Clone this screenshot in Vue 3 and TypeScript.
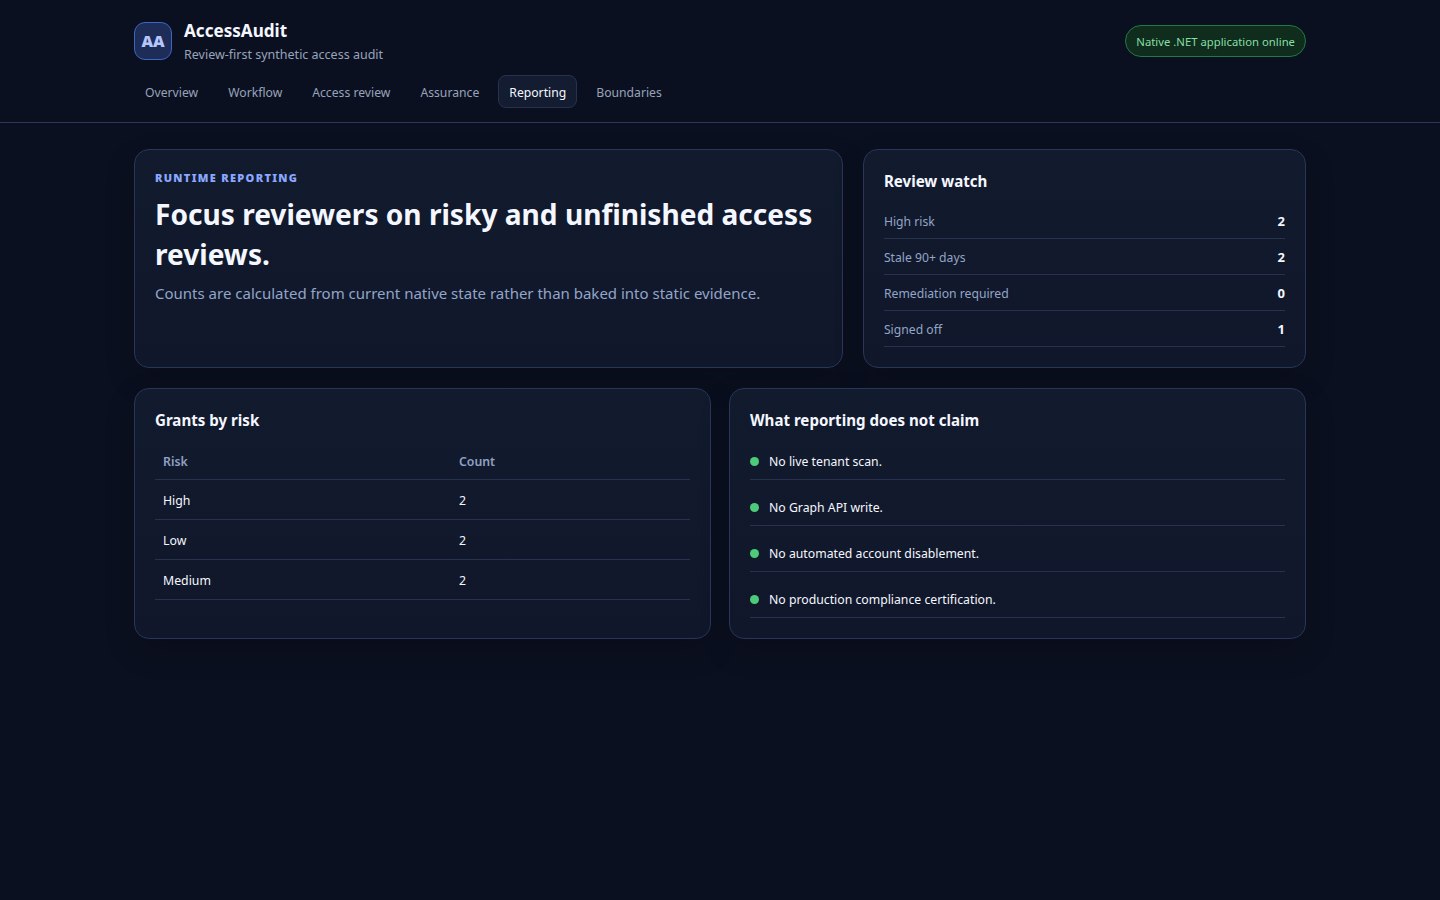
<script setup lang="ts">
interface NavItem {
  label: string
  active?: boolean
}

const navItems: NavItem[] = [
  { label: 'Overview' },
  { label: 'Workflow' },
  { label: 'Access review' },
  { label: 'Assurance' },
  { label: 'Reporting', active: true },
  { label: 'Boundaries' }
]

const watchRows = [
  { label: 'High risk', value: 2 },
  { label: 'Stale 90+ days', value: 2 },
  { label: 'Remediation required', value: 0 },
  { label: 'Signed off', value: 1 }
]

const riskRows = [
  { risk: 'High', count: 2 },
  { risk: 'Low', count: 2 },
  { risk: 'Medium', count: 2 }
]

const claims = [
  'No live tenant scan.',
  'No Graph API write.',
  'No automated account disablement.',
  'No production compliance certification.'
]
</script>

<template>
  <div class="page">
    <header class="topbar">
      <div class="shell">
        <div class="topbar-row">
          <div class="brand">
            <div class="brand-mark">AA</div>
            <div>
              <div class="brand-name">AccessAudit</div>
              <div class="brand-sub">Review-first synthetic access audit</div>
            </div>
          </div>
          <div class="status-pill">Native .NET application online</div>
        </div>
        <nav class="nav">
          <a
            v-for="item in navItems"
            :key="item.label"
            class="nav-link"
            :class="{ 'nav-link-active': item.active }"
          >{{ item.label }}</a>
        </nav>
      </div>
    </header>

    <main class="shell content">
      <section class="grid-top">
        <div class="card hero">
          <div class="eyebrow">RUNTIME REPORTING</div>
          <h1>Focus reviewers on risky and unfinished access reviews.</h1>
          <p>Counts are calculated from current native state rather than baked into static evidence.</p>
        </div>
        <div class="card">
          <h2>Review watch</h2>
          <div v-for="row in watchRows" :key="row.label" class="watch-row">
            <span>{{ row.label }}</span>
            <strong>{{ row.value }}</strong>
          </div>
        </div>
      </section>

      <section class="grid-bottom">
        <div class="card">
          <h2>Grants by risk</h2>
          <table>
            <thead>
              <tr>
                <th class="col-risk">Risk</th>
                <th>Count</th>
              </tr>
            </thead>
            <tbody>
              <tr v-for="row in riskRows" :key="row.risk">
                <td>{{ row.risk }}</td>
                <td>{{ row.count }}</td>
              </tr>
            </tbody>
          </table>
        </div>
        <div class="card">
          <h2>What reporting does not claim</h2>
          <ul class="claims">
            <li v-for="claim in claims" :key="claim">
              <span class="dot"></span>{{ claim }}
            </li>
          </ul>
        </div>
      </section>
    </main>
  </div>
</template>

<style>
html,
body {
  margin: 0;
  background: #0b1020;
}
</style>

<style scoped>
.page {
  min-height: 900px;
  background: #0b1020;
  color: #f4f7ff;
  font-family: "Noto Sans", "Open Sans", sans-serif;
}

.shell {
  width: 1172px;
  margin: 0 auto;
}

.topbar {
  border-bottom: 1px solid #2a3858;
  padding: 20px 0 14px;
}

.topbar-row {
  display: flex;
  justify-content: space-between;
  align-items: flex-start;
}

.brand {
  display: flex;
  align-items: flex-start;
  gap: 12px;
}

.brand-mark {
  width: 38px;
  height: 38px;
  box-sizing: border-box;
  margin-top: 2px;
  border: 1px solid #3b66c4;
  border-radius: 11px;
  background: #1e2c58;
  color: #b4c6fc;
  display: flex;
  align-items: center;
  justify-content: center;
  font-size: 16px;
  font-weight: 900;
}

.brand-name {
  font-size: 17.1px;
  font-weight: 700;
  line-height: 22px;
}

.brand-sub {
  margin-top: 3px;
  font-size: 12.5px;
  line-height: 20px;
  color: #97a3bb;
}

.status-pill {
  box-sizing: border-box;
  height: 32px;
  margin-top: 5px;
  padding: 0 10px;
  display: flex;
  align-items: center;
  border: 1px solid #1f7a43;
  border-radius: 16px;
  background: #0f2c1c;
  color: #86dfa6;
  font-size: 11.3px;
}

.nav {
  display: flex;
  gap: 8px;
  margin-top: 10px;
}

.nav-link {
  box-sizing: border-box;
  height: 33px;
  padding: 2px 10px 0;
  display: flex;
  align-items: center;
  border: 1px solid transparent;
  border-radius: 8px;
  color: #97a3bb;
  font-size: 12.2px;
}

.nav-link-active {
  background: #131c30;
  border-color: #26324f;
  color: #f4f7ff;
}

.content {
  padding-top: 26px;
}

.grid-top {
  display: grid;
  grid-template-columns: 1.6fr 1fr;
  gap: 20px;
}

.grid-bottom {
  display: grid;
  grid-template-columns: 1fr 1fr;
  gap: 18px;
  margin-top: 20px;
}

.card {
  box-sizing: border-box;
  padding: 20px;
  border: 1px solid #28365a;
  border-radius: 15px;
  background: linear-gradient(180deg, #121a2d, #10172a);
  box-shadow: 0 12px 30px rgba(0, 0, 0, 0.18);
}

.eyebrow {
  font-size: 11px;
  font-weight: 900;
  letter-spacing: 1.3px;
  line-height: 16px;
  color: #8aa8ff;
}

h1 {
  margin: 8px 0 0;
  font-size: 28.1px;
  line-height: 40px;
  font-weight: 700;
}

.hero p {
  margin: 7px 0 0;
  font-size: 15px;
  line-height: 24px;
  color: #93a5c8;
}

h2 {
  margin: 0;
  font-size: 15.1px;
  line-height: 22px;
  font-weight: 700;
}

.watch-row {
  height: 36px;
  box-sizing: border-box;
  display: flex;
  justify-content: space-between;
  align-items: center;
  border-bottom: 1px solid #26324f;
  font-size: 12.2px;
  color: #93a5c8;
}

.watch-row span {
  padding-top: 2px;
}

h2 + .watch-row {
  margin-top: 11px;
}

.watch-row strong {
  color: #f4f7ff;
  font-size: 13px;
  font-weight: 700;
}

table {
  width: 100%;
  margin-top: 9px;
  border-collapse: collapse;
  font-size: 12.3px;
}

th {
  height: 36px;
  padding: 3px 8px 0;
  text-align: left;
  font-weight: 600;
  color: #8fa1c4;
  border-bottom: 1px solid #26324f;
}

.col-risk {
  width: 280px;
}

td {
  height: 37px;
  padding: 2px 8px 0;
  border-bottom: 1px solid #26324f;
}

.claims {
  list-style: none;
  margin: 13px 0 0;
  padding: 0;
  display: flex;
  flex-direction: column;
  gap: 10px;
}

.claims li {
  height: 36px;
  box-sizing: border-box;
  display: flex;
  align-items: center;
  border-bottom: 1px solid #26324f;
  font-size: 12.25px;
}

.dot {
  width: 9px;
  height: 9px;
  margin-right: 10px;
  border-radius: 50%;
  background: #4ecb7a;
}
</style>
